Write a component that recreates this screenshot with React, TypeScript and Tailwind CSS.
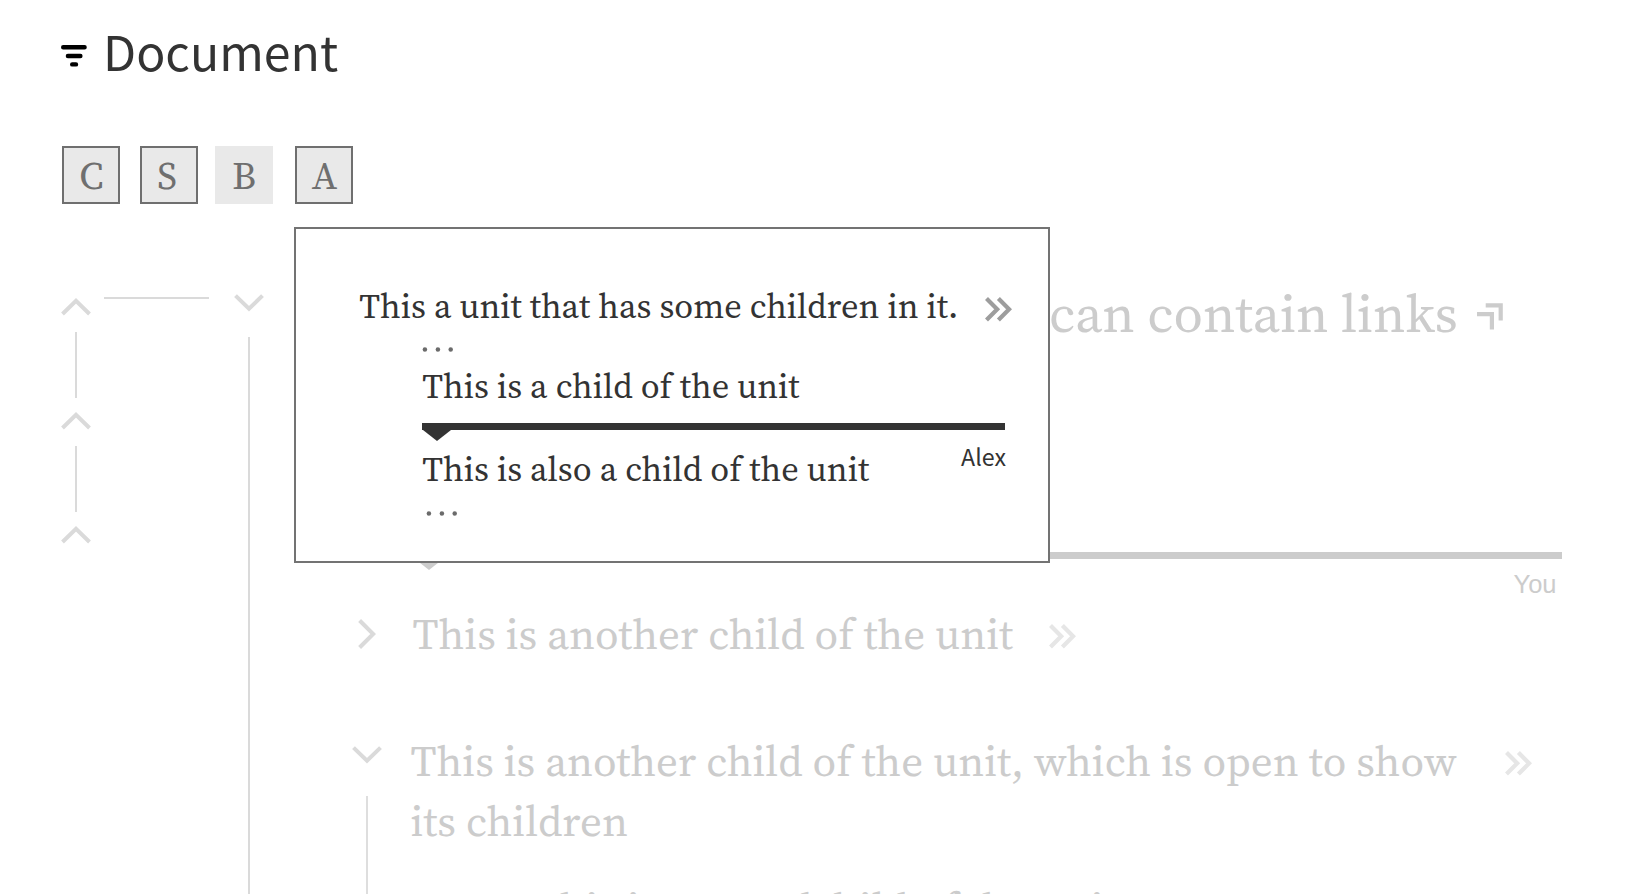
const serif = "font-['Source_Serif_4','Noto_Serif','Liberation_Serif',serif] [font-optical-sizing:none]";
const sans = "font-['Noto_Sans_CJK_SC','Noto_Sans',sans-serif]";

type Direction = "up" | "down" | "right";

function Chevron({ direction }: { direction: Direction }) {
  if (direction === "right") {
    return (
      <svg width="18" height="30" viewBox="0 0 18 30" fill="none" stroke="#dadada" strokeWidth="4" className="shrink-0">
        <path d="M1.6 1.5 L15.2 15 L1.6 28.5" />
      </svg>
    );
  }
  return (
    <svg width="30" height="18" viewBox="0 0 30 18" fill="none" stroke="#dadada" strokeWidth="4" className="shrink-0">
      <path d={direction === "up" ? "M1.5 16 L15 2.8 L28.5 16" : "M1.5 1.6 L15 14.8 L28.5 1.6"} />
    </svg>
  );
}

function DoubleChevron({ className }: { className: string }) {
  return (
    <svg width="27" height="25" viewBox="0 0 27 25" fill="none" stroke="currentColor" strokeWidth="4.2" className={`shrink-0 ${className}`}>
      <path d="M1.5 1.5 L12.2 12.3 L1.5 23.1 M13.4 1.5 L24.1 12.3 L13.4 23.1" />
    </svg>
  );
}

function FilterIcon() {
  return (
    <svg width="26" height="22" viewBox="0 0 26 22" fill="none" stroke="#000" strokeWidth="4.4" strokeLinecap="round">
      <path d="M2.2 2.2 H23.6 M6.9 11 H19.4 M11.2 19.4 H15" />
    </svg>
  );
}

function LinkIcon() {
  return (
    <svg width="26" height="27" viewBox="0 0 26 27" fill="none" stroke="#ccc" strokeWidth="4.2" className="shrink-0">
      <path d="M8.7 2.3 H23.7 V17.6 M0 11.1 H14.9 V26.4" />
    </svg>
  );
}

function Dots() {
  return (
    <svg width="31" height="5" viewBox="0 0 31 5" fill="#6b6b6b">
      <circle cx="2.9" cy="2.5" r="2.25" />
      <circle cx="15.9" cy="2.5" r="2.25" />
      <circle cx="28.7" cy="2.5" r="2.25" />
    </svg>
  );
}

function Pointer({ className }: { className: string }) {
  return (
    <svg width="28" height="11" viewBox="0 0 28 11" fill="currentColor" className={className}>
      <path d="M0 0 H28 L14 11 Z" />
    </svg>
  );
}

function Badge({ letter, className }: { letter: string; className: string }) {
  return (
    <button className={`flex h-[58px] w-[58px] items-center justify-center bg-[#e9e9e9] pt-[2px] text-[38.5px] leading-[52px] text-[#6f6f6f] ${className}`}>
      {letter}
    </button>
  );
}

function Preview() {
  return (
    <section className="absolute top-[227.4px] left-[294.3px] h-[335.6px] w-[755.7px] border-2 border-[#737373] bg-white text-[34.4px] leading-[40px] text-[#333]">
      <div className="flex items-start pt-[57px] pl-[63px] whitespace-nowrap">
        <p className="w-[625.7px]">This a unit that has some children in it.</p>
        <DoubleChevron className="mt-[11px] text-[#9d9d9d]" />
      </div>
      <div className="pl-[126px]">
        <div className="flex h-[40px] pt-[20.5px]"><Dots /></div>
        <p>This is a child of the unit</p>
        <div className="mt-[17px] h-[7px] w-[583px] bg-[#333]" />
        <div className="flex w-[583px] items-start justify-between">
          <div>
            <Pointer className="ml-px text-[#333]" />
            <p className="mt-[8px]">This is also a child of the unit</p>
          </div>
          <span className={`mt-[10px] mr-[-0.7px] text-[23.2px] leading-[32px] ${sans}`}>Alex</span>
        </div>
        <div className="flex pt-[22px] pl-[4px]"><Dots /></div>
      </div>
    </section>
  );
}

export default function App() {
  return (
    <main className={`relative flex h-[894px] w-[1642px] flex-col overflow-hidden bg-white ${serif}`}>
      <header className="mt-5 ml-[61px] flex h-[60px] items-start">
        <div className="pt-[25px]"><FilterIcon /></div>
        <h1 className={`ml-[16px] text-[48.2px] leading-[60px] text-[#333] ${sans}`}>Document</h1>
      </header>

      <nav className="mt-[66px] ml-[62px] flex h-[58px]">
        <Badge letter="C" className="border-2 border-[#6f6f6f] pl-[1px]" />
        <Badge letter="S" className="ml-[19.5px] border-2 border-[#6f6f6f] pr-[3px]" />
        <Badge letter="B" className="ml-[17.5px]" />
        <Badge letter="A" className="ml-[21.5px] border-2 border-[#6f6f6f] pl-[2px]" />
      </nav>

      <div className="mt-[76px] flex min-h-0 flex-1">
        <div className="ml-[61px] flex w-[30px] flex-col items-center pt-[17.5px]">
          <Chevron direction="up" />
          <div className="mt-[16.5px] mb-[13.5px] h-[66px] w-[2px] shrink-0 bg-[#dadada]" />
          <Chevron direction="up" />
          <div className="mt-[16.5px] mb-[13.5px] h-[66px] w-[2px] shrink-0 bg-[#dadada]" />
          <Chevron direction="up" />
        </div>
        <div className="mt-[17px] ml-[13px] h-[2px] w-[105px] bg-[#dadada]" />
        <div className="ml-[25px] flex w-[30px] flex-col items-center pt-[14px]">
          <Chevron direction="down" />
          <div className="mt-[25px] w-[2px] flex-1 bg-[#dadada]" />
        </div>

        <div className="flex min-w-0 flex-1 flex-col text-[43px] leading-[60px] whitespace-nowrap text-[#ccc]">
          <div className="mt-[1px] ml-[785px] flex h-[64px] items-start text-[53.7px] leading-[64px]">
            <h2 className="w-[428px]">can contain links</h2>
            <div className="mt-[22px]"><LinkIcon /></div>
          </div>

          <div className="mt-[207px] ml-[147px] h-[7px] w-[1151px] shrink-0 bg-[#ccc]" />
          <div className="ml-[150.5px] flex w-[1142px] items-start justify-between">
            <Pointer className="text-[#ccc]" />
            <span className="mt-[9px] font-['Liberation_Sans',Arial,sans-serif] text-[25.5px] leading-[32px]">You</span>
          </div>

          <div className="mt-[4px] ml-[94px] flex h-[60px] items-start">
            <div className="mt-[15px]"><Chevron direction="right" /></div>
            <p className="ml-[36.5px] w-[636.5px]">This is another child of the unit</p>
            <DoubleChevron className="mt-[20px] text-[#e6e6e6]" />
          </div>

          <div className="mt-[67px] ml-[88px] flex min-h-0 flex-1">
            <div className="flex w-[30px] flex-col items-center pt-[14.5px]">
              <Chevron direction="down" />
              <div className="mt-[32.5px] w-[2px] flex-1 bg-[#dedede]" />
            </div>
            <div className="ml-[28.5px] flex flex-col">
              <div className="flex items-start">
                <p className="w-[1094px]">
                  This is another child of the unit, which is open to show
                  <br />
                  its children
                </p>
                <DoubleChevron className="mt-[20px] text-[#e6e6e6]" />
              </div>
              <p className="mt-[27px] ml-[123px]">This is a grandchild of the unit</p>
            </div>
          </div>
        </div>
      </div>

      <Preview />
    </main>
  );
}
